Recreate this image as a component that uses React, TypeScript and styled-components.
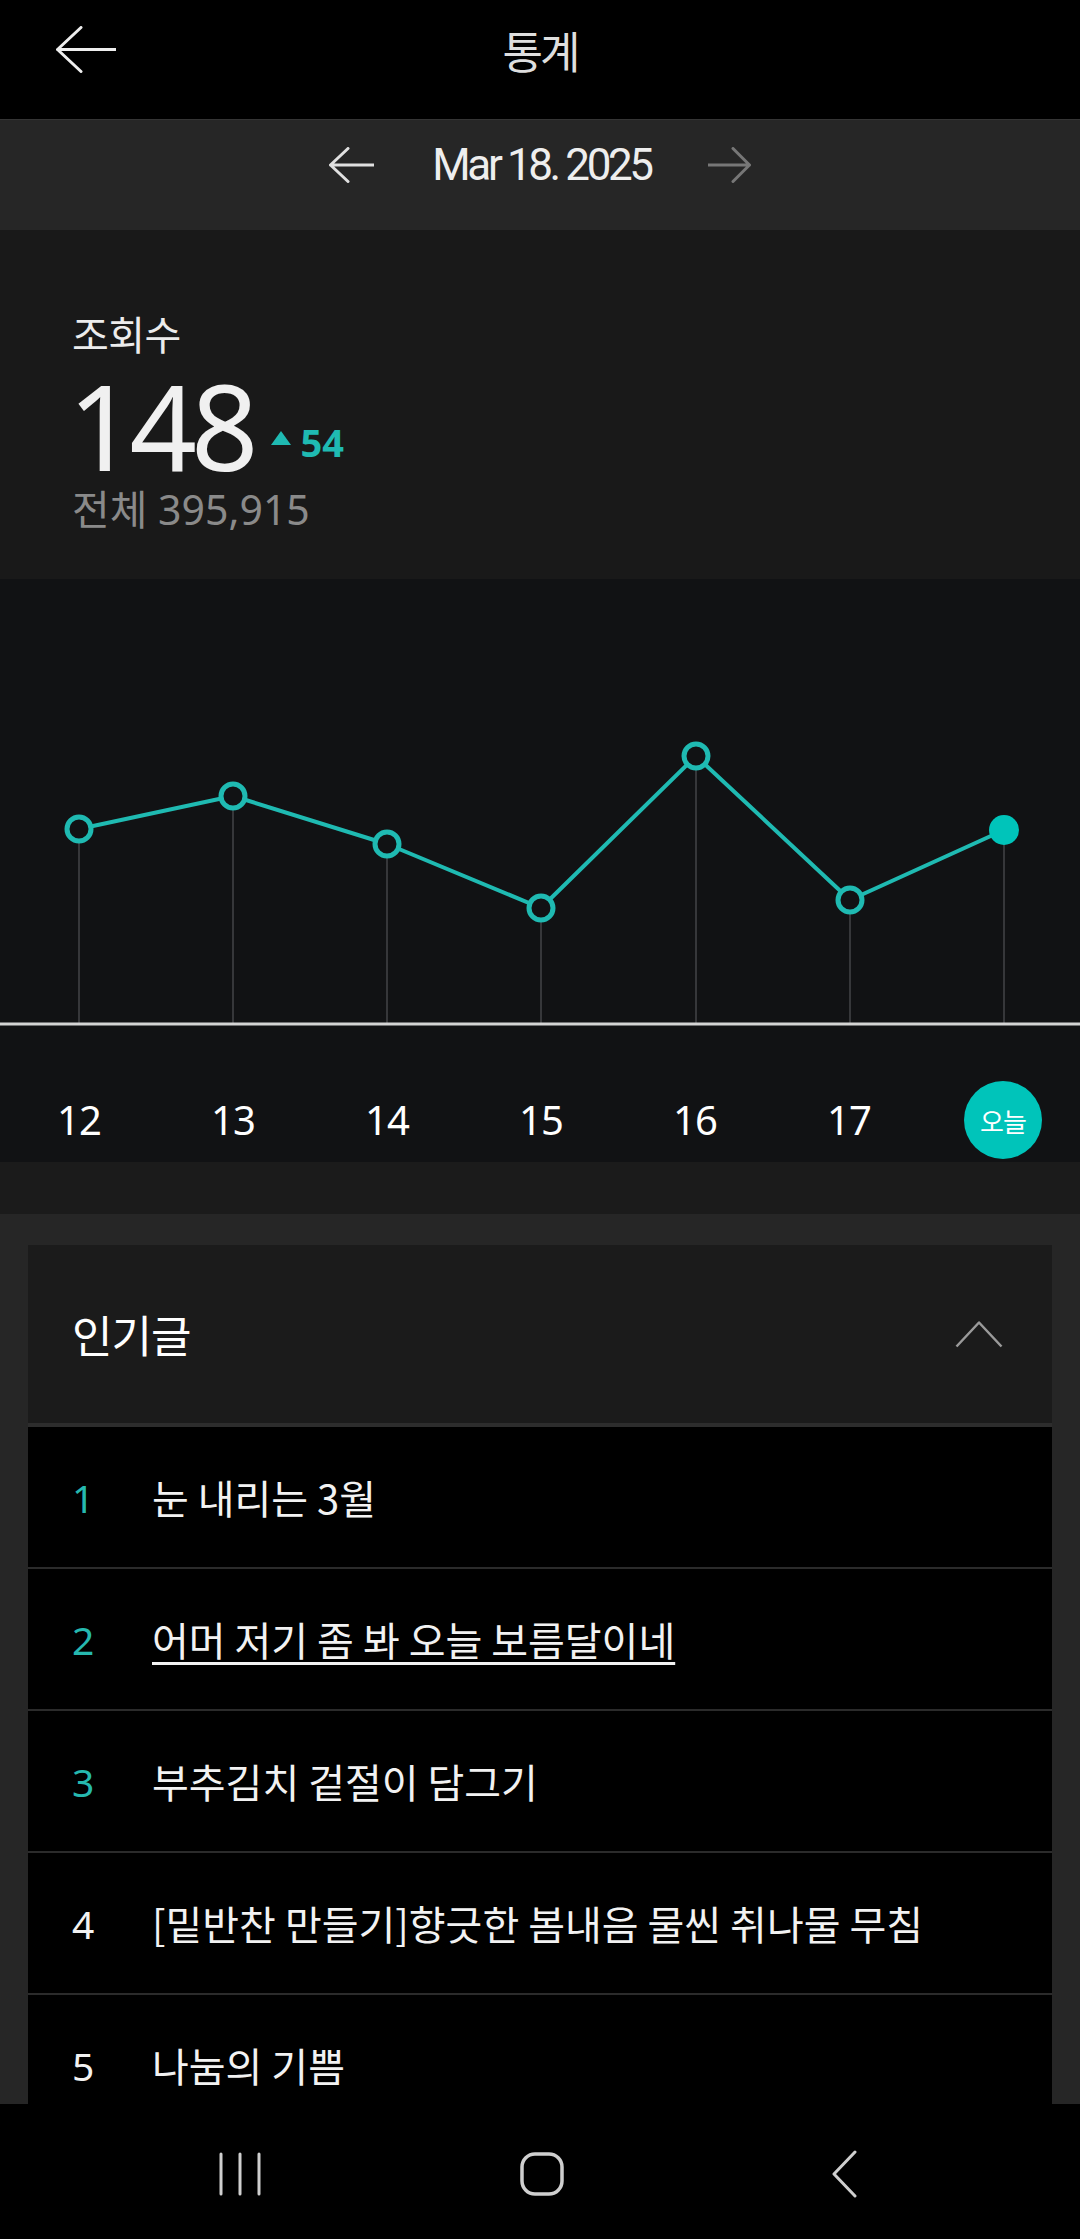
import React from "react";
import styled, { createGlobalStyle } from "styled-components";

const TEAL = "#1fbab2";

const GlobalStyle = createGlobalStyle`
  html, body { margin: 0; padding: 0; background: #000; }
  body { font-family: "Noto Sans CJK KR", "Noto Sans", sans-serif; -webkit-font-smoothing: antialiased; }
  * { box-sizing: border-box; }
`;

const Page = styled.div`
  width: 1080px;
  height: 2239px;
  display: flex;
  flex-direction: column;
  overflow: hidden;
  background: #262626;
`;

const Content = styled.main`
  flex: 1;
  min-height: 0;
  display: flex;
  flex-direction: column;
  overflow: hidden;
`;

const TopBar = styled.header`
  height: 120px;
  flex-shrink: 0;
  background: #000;
  border-bottom: 1px solid #353535;
  padding-bottom: 20px;
  display: grid;
  grid-template-columns: 120px 1fr 120px;
  align-items: center;
`;

const IconButton = styled.div<{ $pad?: number }>`
  display: flex;
  align-items: center;
  padding-left: ${(p) => p.$pad ?? 0}px;
`;

const Title = styled.h1`
  margin: 0;
  text-align: center;
  font-size: 44px;
  font-weight: 400;
  letter-spacing: -3px;
  color: #dedede;
  line-height: 1;
`;

const DateBar = styled.div`
  height: 110px;
  flex-shrink: 0;
  background: #262626;
  padding-bottom: 20px;
  display: flex;
  align-items: center;
  justify-content: center;
`;

const DateText = styled.span`
  font-family: "Roboto", "Noto Sans", sans-serif;
  font-size: 44px;
  letter-spacing: -3.4px;
  line-height: 1;
  color: #eeeeee;
  margin: 0 57px 0 58px;
`;

const StatsSection = styled.section`
  height: 349px;
  flex-shrink: 0;
  background: #191919;
  padding: 78px 0 0 72px;
`;

const StatLabel = styled.div`
  font-size: 40px;
  line-height: 50px;
  letter-spacing: -0.5px;
  color: #ececec;
`;

const ValueRow = styled.div`
  display: flex;
  align-items: flex-start;
  height: 120px;
  margin-top: 8px;
`;

const BigNumber = styled.span`
  font-family: "Noto Sans", sans-serif;
  font-size: 118px;
  line-height: 120px;
  letter-spacing: -6px;
  margin-left: -4px;
  color: #f0f0f0;
`;

const Delta = styled.div`
  display: flex;
  align-items: flex-start;
  gap: 10px;
  margin: 56px 0 0 18px;
  color: ${TEAL};
  font-family: "Noto Sans", sans-serif;
  font-weight: 700;
  font-size: 38px;
  line-height: 40px;
`;

const UpTriangle = styled.span`
  width: 0;
  height: 0;
  margin-top: 9px;
  border-left: 10px solid transparent;
  border-right: 10px solid transparent;
  border-bottom: 14px solid ${TEAL};
`;

const Total = styled.div`
  font-family: "Noto Sans", "Noto Sans CJK KR", sans-serif;
  font-size: 41px;
  line-height: 46px;
  color: #8a8a8a;
`;

const ChartSection = styled.section`
  height: 583px;
  flex-shrink: 0;
  background: #111214;
  display: flex;
  flex-direction: column;
`;

const ChartSvg = styled.svg`
  display: block;
  width: 1080px;
  height: 451px;
`;

const DayRow = styled.div`
  display: grid;
  grid-template-columns: repeat(7, 1fr);
  padding-left: 2px;
  height: 132px;
`;

const DayCell = styled.div`
  height: 78px;
  margin-top: 51px;
  display: flex;
  align-items: center;
  justify-content: center;
`;

const DayLabel = styled.span`
  font-family: "Noto Sans", sans-serif;
  font-size: 40px;
  letter-spacing: -1px;
  color: #ffffff;
  line-height: 1;
`;

const TodayBadge = styled.span`
  width: 78px;
  height: 78px;
  border-radius: 50%;
  background: #00c4ba;
  color: #fff;
  font-size: 26px;
  letter-spacing: -1px;
  display: flex;
  align-items: center;
  justify-content: center;
`;

const Band = styled.div`
  height: 52px;
  flex-shrink: 0;
  background: #1b1b1b;
`;

const Outer = styled.div`
  flex: 1;
  min-height: 0;
  overflow: hidden;
  background: #262626;
  padding: 31px 28px 0;
`;

const Card = styled.div`
  background: #000;
`;

const CardHeader = styled.div`
  height: 182px;
  background: #1b1b1b;
  border-bottom: 4px solid #2d2d2d;
  display: flex;
  align-items: center;
  justify-content: space-between;
  padding: 0 49px 0 44px;
`;

const CardTitle = styled.h2`
  margin: 0;
  font-size: 44px;
  font-weight: 400;
  letter-spacing: -1px;
  color: #ffffff;
`;

const PostRow = styled.div`
  height: 142px;
  border-bottom: 2px solid #2b2b2b;
  display: flex;
  align-items: center;
  padding-left: 44px;
`;

const Rank = styled.span<{ $top: boolean }>`
  width: 80px;
  font-family: "Noto Sans", sans-serif;
  font-size: 39px;
  color: ${(p) => (p.$top ? "#26b8af" : "#f2f2f2")};
`;

const PostTitle = styled.span<{ $underline?: boolean }>`
  font-size: 40px;
  letter-spacing: 0px;
  color: #f2f2f2;
  text-decoration: ${(p) => (p.$underline ? "underline" : "none")};
  text-decoration-thickness: 3px;
  text-underline-offset: 6px;
`;

const NavBar = styled.nav`
  height: 135px;
  flex-shrink: 0;
  background: #000;
  display: grid;
  grid-template-columns: repeat(3, 302px);
  padding: 5px 0 0 89px;
  align-items: center;
  justify-items: center;
`;

const xs = [79, 233, 387, 541, 696, 850, 1004];
const ys = [250, 217, 265, 329, 177, 321, 251];
const BASE = 445;

const days = ["12", "13", "14", "15", "16", "17"];

const posts = [
  { title: "눈 내리는 3월" },
  { title: "어머 저기 좀 봐 오늘 보름달이네", underline: true },
  { title: "부추김치 겉절이 담그기" },
  { title: "[밑반찬 만들기]향긋한 봄내음 물씬 취나물 무침" },
  { title: "나눔의 기쁨" },
];

function Arrow({ dir, color, w, h, stroke }: { dir: "left" | "right"; color: string; w: number; h: number; stroke: number }) {
  const head = Math.round(w * 0.42);
  const mid = h / 2;
  const d =
    dir === "left"
      ? `M${w} ${mid} H1.5 M${head} 1.5 L1.5 ${mid} L${head} ${h - 1.5}`
      : `M0 ${mid} H${w - 1.5} M${w - head} 1.5 L${w - 1.5} ${mid} L${w - head} ${h - 1.5}`;
  return (
    <svg width={w} height={h} viewBox={`0 0 ${w} ${h}`} fill="none">
      <path d={d} stroke={color} strokeWidth={stroke} strokeLinecap="round" strokeLinejoin="round" />
    </svg>
  );
}

export default function App() {
  const linePts = xs.map((x, i) => `${x},${ys[i]}`).join(" ");
  return (
    <>
      <GlobalStyle />
      <Page>
        <TopBar>
          <IconButton $pad={56}>
            <Arrow dir="left" color="#eeeeee" w={60} h={47} stroke={3} />
          </IconButton>
          <Title>통계</Title>
          <div />
        </TopBar>
        <Content>
          <DateBar>
            <Arrow dir="left" color="#e0e0e0" w={45} h={36} stroke={3} />
            <DateText>Mar 18. 2025</DateText>
            <Arrow dir="right" color="#777777" w={43} h={36} stroke={3} />
          </DateBar>

          <StatsSection>
            <StatLabel>조회수</StatLabel>
            <ValueRow>
              <BigNumber>148</BigNumber>
              <Delta>
                <UpTriangle />
                <span>54</span>
              </Delta>
            </ValueRow>
            <Total>전체 395,915</Total>
          </StatsSection>

          <ChartSection>
            <ChartSvg viewBox="0 0 1080 451">
              {xs.map((x, i) => (
                <line key={`g${i}`} x1={x} y1={ys[i]} x2={x} y2={BASE} stroke="#36373a" strokeWidth={2} />
              ))}
              <line x1={0} y1={BASE} x2={1080} y2={BASE} stroke="#d4d4d4" strokeWidth={3} />
              <polyline points={linePts} fill="none" stroke={TEAL} strokeWidth={4} strokeLinejoin="round" />
              {xs.slice(0, 6).map((x, i) => (
                <circle key={`c${i}`} cx={x} cy={ys[i]} r={12} fill="#111214" stroke={TEAL} strokeWidth={5} />
              ))}
              <circle cx={xs[6]} cy={ys[6]} r={15} fill="#00c4ba" />
            </ChartSvg>
            <DayRow>
              {days.map((d) => (
                <DayCell key={d}>
                  <DayLabel>{d}</DayLabel>
                </DayCell>
              ))}
              <DayCell>
                <TodayBadge>오늘</TodayBadge>
              </DayCell>
            </DayRow>
          </ChartSection>

          <Band />

          <Outer>
            <Card>
              <CardHeader>
                <CardTitle>인기글</CardTitle>
                <svg width="48" height="27" viewBox="0 0 48 27" fill="none">
                  <path d="M1.5 25.5 L24 1.5 L46.5 25.5" stroke="#9a9a9a" strokeWidth={2.5} strokeLinejoin="round" />
                </svg>
              </CardHeader>
              {posts.map((p, i) => (
                <PostRow key={i}>
                  <Rank $top={i < 3}>{i + 1}</Rank>
                  <PostTitle $underline={p.underline}>{p.title}</PostTitle>
                </PostRow>
              ))}
            </Card>
          </Outer>
        </Content>
        <NavBar>
          <svg width="42" height="44" viewBox="0 0 42 44" fill="none">
            <path d="M2 2 V42 M21 2 V42 M40 2 V42" stroke="#cfcfcf" strokeWidth={3} strokeLinecap="round" />
          </svg>
          <svg width="44" height="44" viewBox="0 0 44 44" fill="none">
            <rect x="2" y="2" width="40" height="40" rx="13" stroke="#cfcfcf" strokeWidth={3.5} />
          </svg>
          <svg width="26" height="48" viewBox="0 0 26 48" fill="none">
            <path d="M24 2 L3 24 L24 46" stroke="#cfcfcf" strokeWidth={3} strokeLinecap="round" strokeLinejoin="round" />
          </svg>
        </NavBar>
      </Page>
    </>
  );
}
